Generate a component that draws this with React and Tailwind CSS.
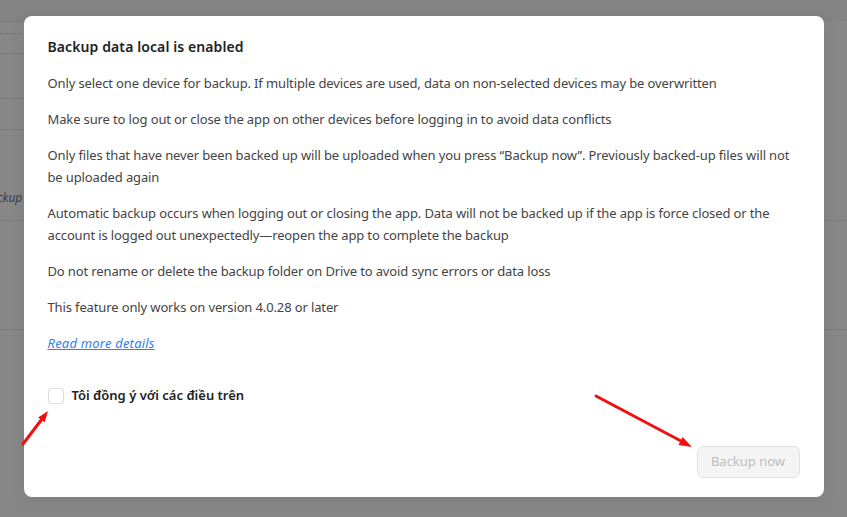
const NOTES = [
  'Only select one device for backup. If multiple devices are used, data on non-selected devices may be overwritten',
  'Make sure to log out or close the app on other devices before logging in to avoid data conflicts',
  'Only files that have never been backed up will be uploaded when you press “Backup now”. Previously backed-up files will not be uploaded again',
  'Automatic backup occurs when logging out or closing the app. Data will not be backed up if the app is force closed or the account is logged out unexpectedly—reopen the app to complete the backup',
  'Do not rename or delete the backup folder on Drive to avoid sync errors or data loss',
  'This feature only works on version 4.0.28 or later',
];

const PageBehind = () => (
  <div className="h-screen w-full overflow-hidden bg-[#878787]">
    <div className="h-[21px] bg-[#838383]" />
    <div className="w-[500px] border-t border-[#7b7b7b]">
      <div className="h-[31px] pt-[11px]">
        <div className="w-[22px] border-t border-dotted border-[#6e6e6e]" />
      </div>
      <div className="h-[45px] border-t border-[#7b7b7b]" />
      <div className="h-[31px] border-t border-[#7b7b7b]" />
      <div className="h-[91px] border-t border-[#7b7b7b] pt-[59px]">
        <div className="ml-[-17px] text-[12px] italic leading-[18px] text-[#3a3a4a]">Backup phone</div>
      </div>
    </div>
    <div className="h-[109px] border-t border-[#7b7b7b]" />
    <div className="border-t border-[#7b7b7b]" />
  </div>
);

const Arrows = () => (
  <svg className="pointer-events-none absolute inset-0" width="847" height="517" viewBox="0 0 847 517">
    <line x1="23" y1="444" x2="42" y2="419" stroke="#f20f0f" strokeWidth="3" strokeLinecap="round" />
    <polygon points="48,411 44.6,422.2 38.2,417.4" fill="#f20f0f" />
    <line x1="596" y1="396" x2="681" y2="441" stroke="#f20f0f" strokeWidth="3" strokeLinecap="round" />
    <polygon points="692,447 678.4,444.9 682.6,436.9" fill="#f20f0f" />
  </svg>
);

export default function App() {
  return (
    <div className="relative h-screen w-full overflow-hidden font-['Noto_Sans',sans-serif]">
      <PageBehind />
      <div className="absolute inset-0 flex justify-center pt-4">
        <div className="flex h-[481px] w-[800px] flex-col rounded-lg bg-white px-6 pt-5 shadow-[0_4px_16px_rgba(0,0,0,0.08)]">
          <div className="space-y-[14px]">
            <h2 className="text-[14px] font-semibold leading-[22px] tracking-[0.1px] text-[#222]">Backup data local is enabled</h2>
            {NOTES.map((t) => (
              <p key={t} className="text-[13px] leading-[22px] tracking-[-0.13px] text-[#444]">
                {t}
              </p>
            ))}
            <a href="#" className="block w-fit text-[13px] italic leading-[22px] tracking-[0.2px] text-[#2f80ed] underline">
              Read more details
            </a>
          </div>

          <label className="mt-[31px] flex h-[22px] items-center gap-2">
            <span className="h-4 w-4 rounded-[3px] border border-[#dcdcdc] bg-white" />
            <span className="text-[13px] font-semibold text-[#222]">Tôi đồng ý với các điều trên</span>
          </label>

          <div className="mt-[39px] flex justify-end">
            <button
              disabled
              className="h-8 w-[103px] rounded-md border border-[#e2e2e2] bg-[#f4f4f4] text-[13px] text-[#bcbcbc]"
            >
              Backup now
            </button>
          </div>
        </div>
      </div>
      <Arrows />
    </div>
  );
}
